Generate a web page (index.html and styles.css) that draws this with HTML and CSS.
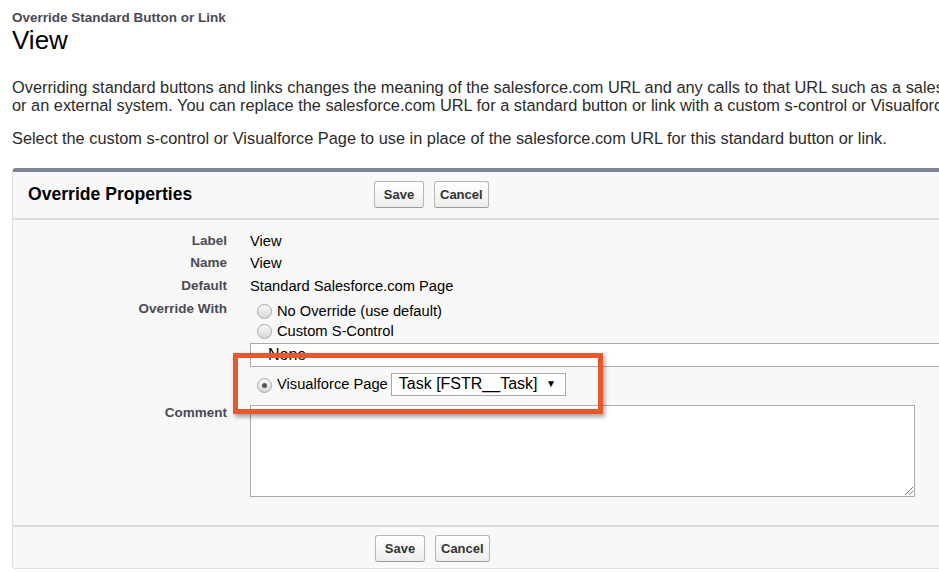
FILE: index.html
```html
<!DOCTYPE html>
<html>
<head>
<meta charset="utf-8">
<link rel="stylesheet" href="styles.css">
</head>
<body>
<div class="page">
  <div class="crumb">Override Standard Button or Link</div>
  <h1 class="title">View</h1>
  <p class="intro">Overriding standard buttons and links changes the meaning of the salesforce.com URL and any calls to that URL such as a salesforce.com link<br>or an external system. You can replace the salesforce.com URL for a standard button or link with a custom s-control or Visualforce Page.</p>
  <p class="intro second">Select the custom s-control or Visualforce Page to use in place of the salesforce.com URL for this standard button or link.</p>

  <div class="panel">
    <div class="panel-head">
      <h2 class="panel-title">Override Properties</h2>
      <div class="btns">
        <button class="btn">Save</button>
        <button class="btn">Cancel</button>
      </div>
    </div>

    <div class="panel-body">
      <div class="lbl">Label</div>
      <div class="val">View</div>

      <div class="lbl">Name</div>
      <div class="val">View</div>

      <div class="lbl">Default</div>
      <div class="val">Standard Salesforce.com Page</div>

      <div class="lbl">Override With</div>
      <div class="val options">
        <div class="opt"><span class="radio"></span>No Override (use default)</div>
        <div class="opt"><span class="radio"></span>Custom S-Control</div>
        <div class="listbox">None</div>
        <div class="opt vf"><span class="radio checked"></span>Visualforce Page<span class="select">Task [FSTR__Task]<span class="arrow">▼</span></span></div>
      </div>

      <div class="lbl comment-lbl">Comment</div>
      <div class="val"><div class="textarea"><span class="grip"></span></div></div>
    </div>

    <div class="panel-foot">
      <div class="btns">
        <button class="btn">Save</button>
        <button class="btn">Cancel</button>
      </div>
    </div>

    <div class="callout"></div>
  </div>
</div>
</body>
</html>
```

FILE: styles.css
```css
html, body {
  margin: 0;
  padding: 0;
  background: #fff;
}
body {
  font-family: "Liberation Sans", Arial, sans-serif;
  color: #000;
  overflow: hidden;
  width: 939px;
  height: 572px;
}
.page {
  padding: 10px 0 0 12px;
  overflow: hidden;
  width: 927px;
}
.crumb {
  font-size: 13.5px;
  font-weight: bold;
  color: #4a4a56;
  line-height: 16px;
}
.title {
  margin: 0;
  font-size: 26px;
  font-weight: normal;
  line-height: 28px;
}
.intro {
  margin: 25px 0 0;
  font-size: 16.35px;
  line-height: 17.5px;
  color: #2b2b2b;
  white-space: nowrap;
}
.intro.second {
  margin-top: 16px;
}
.panel {
  position: relative;
  margin-top: 20px;
  width: 960px;
  background: #f8f8f8;
  border-top: 4px solid #7b8499;
  border-left: 1px solid #e0e0e0;
  border-bottom: 1px solid #e0e0e0;
  border-radius: 4px 0 0 4px;
}
.panel-head {
  display: grid;
  grid-template-columns: 346px auto;
  align-items: center;
  height: 46px;
  padding-left: 15px;
  border-bottom: 2px solid #dcdcdc;
}
.panel-title {
  margin: 0;
  font-size: 17.6px;
  font-weight: bold;
  color: #000;
}
.btns {
  display: flex;
  gap: 10px;
}
.btn {
  font-family: "Liberation Sans", Arial, sans-serif;
  font-size: 13px;
  font-weight: bold;
  color: #333;
  height: 27px;
  min-width: 50px;
  padding: 0 5px;
  border: 1px solid #b5b5b5;
  border-bottom-color: #9a9a9a;
  border-radius: 3px;
  background: linear-gradient(#ffffff, #ededed);
}
.panel-body {
  display: grid;
  grid-template-columns: 214px 1fr;
  column-gap: 23px;
  padding-top: 10px;
  padding-bottom: 28px;
}
.lbl {
  text-align: right;
  font-size: 13.5px;
  font-weight: bold;
  color: #4a4a56;
  line-height: 22.8px;
}
.val {
  font-size: 14.7px;
  line-height: 22.8px;
  color: #000;
}
.options {
  line-height: 20px;
  padding-top: 3px;
}
.opt {
  display: flex;
  align-items: center;
  height: 20px;
}
.radio {
  width: 13px;
  height: 13px;
  border: 1px solid #a8a8a8;
  border-radius: 50%;
  background: linear-gradient(#fafafa, #d8d8d8);
  margin: 2px 5px 0 7px;
  position: relative;
  flex: none;
}
.radio.checked::after {
  content: "";
  position: absolute;
  left: 4px;
  top: 4px;
  width: 5px;
  height: 5px;
  border-radius: 50%;
  background: #555;
}
.listbox {
  margin-top: 2px;
  height: 22px;
  width: 720px;
  border: 1px solid #a9a9a9;
  background: #fff;
  font-size: 16px;
  line-height: 22px;
  padding-left: 17px;
  box-sizing: content-box;
}
.opt.vf {
  margin-top: 6px;
  height: 23px;
}
.select {
  display: inline-flex;
  align-items: center;
  margin-left: 3px;
  width: 166px;
  height: 21px;
  padding-left: 7px;
  border: 1px solid #a9a9a9;
  background: #fff;
  font-size: 16px;
  position: relative;
}
.arrow {
  position: absolute;
  right: 9px;
  top: 4px;
  font-size: 10px;
  line-height: 12px;
}
.comment-lbl {
  line-height: 15px;
  margin-top: 9px;
}
.textarea {
  margin-top: 9px;
  width: 663px;
  height: 90px;
  border: 1px solid #a9a9a9;
  background: #fff;
  position: relative;
}
.grip {
  position: absolute;
  right: 1px;
  bottom: 1px;
  width: 8px;
  height: 8px;
  background: linear-gradient(135deg, transparent 45%, #777 45%, #777 52%, transparent 52%, transparent 70%, #777 70%, #777 77%, transparent 77%);
}
.panel-foot {
  border-top: 2px solid #dcdcdc;
  padding: 8px 0 6px 362px;
}
.callout {
  position: absolute;
  left: 220px;
  top: 181px;
  width: 360px;
  height: 51px;
  border: 5px solid #e9582b;
  box-shadow: 2px 3px 4px rgba(0, 0, 0, 0.35);
}
```
